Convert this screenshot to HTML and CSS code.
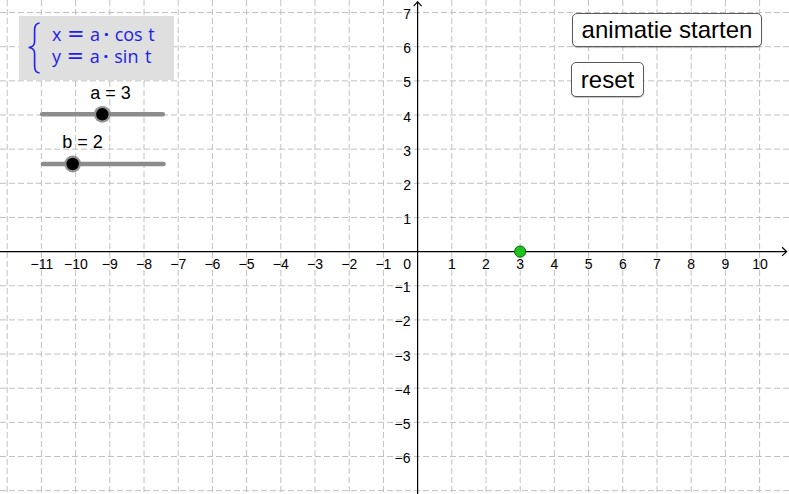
FILE: index.html
```html
<!DOCTYPE html>
<html lang="nl">
<head>
<meta charset="utf-8">
<title>Parameterkromme</title>
<link rel="stylesheet" href="styles.css">
</head>
<body>
<div class="applet">
  <svg class="graph" width="789" height="494" viewBox="0 0 789 494" xmlns="http://www.w3.org/2000/svg">
    <g class="grid">
      <line x1="7.2" y1="0" x2="7.2" y2="494"/>
      <line x1="41.4" y1="0" x2="41.4" y2="494"/>
      <line x1="75.6" y1="0" x2="75.6" y2="494"/>
      <line x1="109.8" y1="0" x2="109.8" y2="494"/>
      <line x1="144" y1="0" x2="144" y2="494"/>
      <line x1="178.2" y1="0" x2="178.2" y2="494"/>
      <line x1="212.4" y1="0" x2="212.4" y2="494"/>
      <line x1="246.6" y1="0" x2="246.6" y2="494"/>
      <line x1="280.8" y1="0" x2="280.8" y2="494"/>
      <line x1="315" y1="0" x2="315" y2="494"/>
      <line x1="349.2" y1="0" x2="349.2" y2="494"/>
      <line x1="383.4" y1="0" x2="383.4" y2="494"/>
      <line x1="451.8" y1="0" x2="451.8" y2="494"/>
      <line x1="486" y1="0" x2="486" y2="494"/>
      <line x1="520.2" y1="0" x2="520.2" y2="494"/>
      <line x1="554.4" y1="0" x2="554.4" y2="494"/>
      <line x1="588.6" y1="0" x2="588.6" y2="494"/>
      <line x1="622.8" y1="0" x2="622.8" y2="494"/>
      <line x1="657" y1="0" x2="657" y2="494"/>
      <line x1="691.2" y1="0" x2="691.2" y2="494"/>
      <line x1="725.4" y1="0" x2="725.4" y2="494"/>
      <line x1="759.6" y1="0" x2="759.6" y2="494"/>

      <line x1="0" y1="12.55" x2="789" y2="12.55"/>
      <line x1="0" y1="46.7" x2="789" y2="46.7"/>
      <line x1="0" y1="80.85" x2="789" y2="80.85"/>
      <line x1="0" y1="115" x2="789" y2="115"/>
      <line x1="0" y1="149.15" x2="789" y2="149.15"/>
      <line x1="0" y1="183.3" x2="789" y2="183.3"/>
      <line x1="0" y1="217.45" x2="789" y2="217.45"/>
      <line x1="0" y1="285.75" x2="789" y2="285.75"/>
      <line x1="0" y1="319.9" x2="789" y2="319.9"/>
      <line x1="0" y1="354.05" x2="789" y2="354.05"/>
      <line x1="0" y1="388.2" x2="789" y2="388.2"/>
      <line x1="0" y1="422.35" x2="789" y2="422.35"/>
      <line x1="0" y1="456.5" x2="789" y2="456.5"/>
      <line x1="0" y1="490.65" x2="789" y2="490.65"/>
    </g>

    <g class="axes">
      <line x1="417.6" y1="1.8" x2="417.6" y2="494"/>
      <line x1="0" y1="251.6" x2="786.6" y2="251.6"/>
      <polyline points="413.6,6.1 417.6,1.8 421.6,6.1"/>
      <polyline points="782.1,247.3 786.6,251.6 782.1,255.9"/>
    </g>

    <g class="xlabels">
      <text x="41.9" y="268.5">−11</text>
      <text x="75.9" y="268.5">−10</text>
      <text x="109.8" y="268.5">−9</text>
      <text x="144" y="268.5">−8</text>
      <text x="178.2" y="268.5">−7</text>
      <text x="212.4" y="268.5">−6</text>
      <text x="246.6" y="268.5">−5</text>
      <text x="280.8" y="268.5">−4</text>
      <text x="315" y="268.5">−3</text>
      <text x="349.2" y="268.5">−2</text>
      <text x="383.4" y="268.5">−1</text>
      <text x="451.8" y="268.5">1</text>
      <text x="486" y="268.5">2</text>
      <text x="520.2" y="268.5">3</text>
      <text x="554.4" y="268.5">4</text>
      <text x="588.6" y="268.5">5</text>
      <text x="622.8" y="268.5">6</text>
      <text x="657" y="268.5">7</text>
      <text x="691.2" y="268.5">8</text>
      <text x="725.4" y="268.5">9</text>
      <text x="760" y="268.5">10</text>
    </g>

    <g class="ylabels">
      <text x="411" y="268.5">0</text>
      <text x="411" y="19">7</text>
      <text x="411" y="53.2">6</text>
      <text x="411" y="87.3">5</text>
      <text x="411" y="121.5">4</text>
      <text x="411" y="155.6">3</text>
      <text x="411" y="189.8">2</text>
      <text x="411" y="223.9">1</text>
      <text x="410.5" y="292.2">−1</text>
      <text x="410.5" y="326.4">−2</text>
      <text x="410.5" y="360.5">−3</text>
      <text x="410.5" y="394.7">−4</text>
      <text x="410.5" y="428.8">−5</text>
      <text x="410.5" y="463">−6</text>
    </g>

    <circle class="point" cx="520.2" cy="251.6" r="5.6"/>

    <g class="slider">
      <text class="slider-label" x="90.3" y="99.4">a = 3</text>
      <line class="track" x1="42.2" y1="114.3" x2="162.8" y2="114.3"/>
      <circle class="halo" cx="102.3" cy="114.3" r="8.4"/>
      <circle class="knob" cx="102.3" cy="114.3" r="6.2"/>
    </g>
    <g class="slider">
      <text class="slider-label" x="62.2" y="148.4">b = 2</text>
      <line class="track" x1="43" y1="164" x2="163.5" y2="164"/>
      <circle class="halo" cx="72.7" cy="164" r="8.4"/>
      <circle class="knob" cx="72.7" cy="164" r="6.2"/>
    </g>
  </svg>

  <div class="algebra">
    <svg class="brace" width="14" height="64" viewBox="0 0 14 64" xmlns="http://www.w3.org/2000/svg">
      <path d="M12.6,7 C8.8,7.4 7.6,9.6 7.6,14 L7.6,25.5 C7.6,29.6 5.2,31.2 1.6,31.5 C5.2,31.8 7.6,33.4 7.6,37.5 L7.6,50 C7.6,54.4 8.8,56.6 12.6,57"/>
    </svg>
    <div class="eqs">
      <div class="eq-line"><span>x</span><span class="eq">=</span><span class="sp">a</span><span class="dot">·</span><span class="fn">cos</span><span class="sp">t</span></div>
      <div class="eq-line"><span>y</span><span class="eq">=</span><span class="sp">a</span><span class="dot">·</span><span class="fn">sin</span><span class="sp2">t</span></div>
    </div>
  </div>

  <button class="ggb-btn start" type="button">animatie starten</button>
  <button class="ggb-btn reset" type="button">reset</button>
</div>
</body>
</html>
```

FILE: styles.css
```css
html, body {
  margin: 0;
  padding: 0;
  background: #ffffff;
}

.applet {
  position: relative;
  width: 789px;
  height: 494px;
  overflow: hidden;
  background: #ffffff;
  font-family: "Liberation Sans", Arial, sans-serif;
}

.graph {
  display: block;
}

.grid line {
  stroke: #c0c0c0;
  stroke-width: 1;
  stroke-dasharray: 6 3;
  fill: none;
}

.axes line,
.axes polyline {
  stroke: #000000;
  stroke-width: 1.2;
  fill: none;
}

.xlabels text,
.ylabels text {
  font-family: "Liberation Sans", Arial, sans-serif;
  font-size: 14px;
  fill: #000000;
}

.xlabels text {
  text-anchor: middle;
}

.ylabels text {
  text-anchor: end;
}

.point {
  fill: #1ec31e;
  stroke: #0b5f0b;
  stroke-width: 1;
}

.slider-label {
  font-family: "Liberation Sans", Arial, sans-serif;
  font-size: 18px;
  fill: #000000;
}

.track {
  stroke: #8c8c8c;
  stroke-width: 4.6;
  stroke-linecap: round;
}

.halo {
  fill: #8a8a8a;
  opacity: 0.9;
}

.knob {
  fill: #000000;
}

.algebra {
  position: absolute;
  left: 19px;
  top: 16px;
  width: 155px;
  height: 64px;
  background: #dfdfdf;
  display: flex;
  align-items: flex-start;
}

.brace {
  display: block;
  margin-left: 8px;
  flex: none;
}

.brace path {
  fill: none;
  stroke: #2121ee;
  stroke-width: 1.6;
}

.eqs {
  margin-left: 11px;
  padding-top: 7px;
  font-family: "Open Sans", sans-serif;
  font-size: 18px;
  line-height: 22px;
  color: #2121ee;
  white-space: nowrap;
}

.eq-line {
  display: block;
}

.eq {
  font-family: "DejaVu Sans", sans-serif;
  font-size: 21px;
  line-height: 0;
  margin-left: 5.5px;
}

.sp {
  margin-left: 5.5px;
}

.sp2 {
  margin-left: 6.5px;
}

.dot {
  margin-left: 3.6px;
  font-weight: 700;
}

.fn {
  margin-left: 5.9px;
}

.ggb-btn {
  position: absolute;
  margin: 0;
  padding: 0;
  background: #ffffff;
  border: 1px solid #5a5a5a;
  border-radius: 5px;
  box-shadow: 0 1px 1px rgba(0, 0, 0, 0.25);
  font-family: "Liberation Sans", Arial, sans-serif;
  font-size: 24px;
  color: #000000;
  line-height: 1;
  text-align: center;
}

.start {
  left: 572px;
  top: 13px;
  width: 190px;
  height: 34px;
}

.reset {
  left: 571px;
  top: 62px;
  width: 73px;
  height: 35px;
}
```
